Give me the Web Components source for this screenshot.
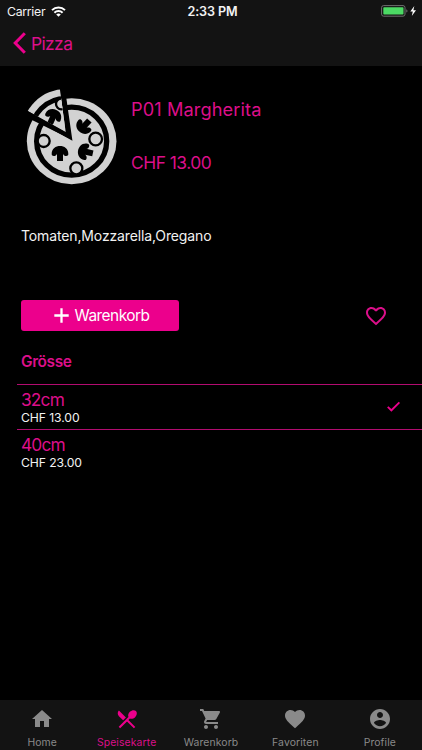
<!DOCTYPE html>
<html lang="de">
<head>
<meta charset="utf-8">
<meta name="viewport" content="width=device-width, initial-scale=1">
<title>P01 Margherita</title>
<style>
  :root {
    --accent: #ec008c;
    --accent-text: #dc0f8a;
    --bar-bg: #131313;
    --muted: #8a8a8a;
  }
  body {
    margin: 0;
    background: #000;
    color: #f2f2f2;
    font-family: Inter, "Liberation Sans", sans-serif;
  }
</style>
</head>
<body>
<pizza-app></pizza-app>

<script>
const define = (name, html) => {
  const tpl = document.createElement("template");
  tpl.innerHTML = html;
  customElements.define(name, class extends HTMLElement {
    constructor() {
      super();
      this.attachShadow({ mode: "open" }).appendChild(tpl.content.cloneNode(true));
    }
  });
};

/* ---- Icons ---- */
const ICONS = {
  home: "M10 20v-6h4v6h5v-8h3L12 3 2 12h3v8z",
  menu: "M8.1 13.34l2.83-2.83L3.91 3.5c-1.56 1.56-1.56 4.09 0 5.66l4.19 4.18zm6.78-1.81c1.53.71 3.68.21 5.27-1.38 1.91-1.91 2.28-4.65.81-6.12-1.46-1.46-4.2-1.1-6.12.81-1.59 1.59-2.09 3.74-1.38 5.27L3.7 19.87l1.41 1.41L12 14.41l6.88 6.88 1.41-1.41L13.41 13l1.47-1.47z",
  cart: "M7 18c-1.1 0-1.99.9-1.99 2S5.9 22 7 22s2-.9 2-2-.9-2-2-2zM1 2v2h2l3.6 7.59-1.35 2.45c-.16.28-.25.61-.25.96 0 1.1.9 2 2 2h12v-2H7.42c-.14 0-.25-.11-.25-.25l.03-.12.9-1.63h7.45c.75 0 1.41-.41 1.75-1.03l3.58-6.49c.08-.14.12-.31.12-.48 0-.55-.45-1-1-1H5.21l-.94-2H1zm16 16c-1.1 0-1.99.9-1.99 2s.89 2 1.99 2 2-.9 2-2-.9-2-2-2z",
  heart: "M12 21.35l-1.45-1.32C5.4 15.36 2 12.28 2 8.5 2 5.42 4.42 3 7.5 3c1.74 0 3.41.81 4.5 2.09C13.09 3.81 14.76 3 16.5 3 19.58 3 22 5.42 22 8.5c0 3.78-3.4 6.86-8.55 11.54L12 21.35z",
  "heart-outline": "M16.5 3c-1.74 0-3.41.81-4.5 2.09C10.91 3.81 9.24 3 7.5 3 4.42 3 2 5.42 2 8.5c0 3.78 3.4 6.86 8.55 11.54L12 21.35l1.45-1.32C18.6 15.36 22 12.28 22 8.5 22 5.42 19.58 3 16.5 3zm-4.4 15.55l-.1.1-.1-.1C7.14 14.24 4 11.39 4 8.5 4 6.5 5.5 5 7.5 5c1.54 0 3.04.99 3.57 2.36h1.87C13.46 5.99 14.96 5 16.5 5c2 0 3.5 1.5 3.5 3.5 0 2.89-3.14 5.74-7.9 10.05z",
  profile: "M12 2C6.48 2 2 6.48 2 12s4.48 10 10 10 10-4.48 10-10S17.52 2 12 2zm0 3c1.66 0 3 1.34 3 3s-1.34 3-3 3-3-1.34-3-3 1.34-3 3-3zm0 14.2c-2.5 0-4.71-1.28-6-3.22.03-1.99 4-3.08 6-3.08 1.99 0 5.97 1.09 6 3.08-1.29 1.94-3.5 3.22-6 3.22z",
  check: "M9 15.7 4.8 11.5 3 13.4 9 19.4 21.2 7.2 19.4 5.3z",
  plus: "M19.5 13.2h-6.3v6.3h-2.4v-6.3H4.5v-2.4h6.3V4.5h2.4v6.3h6.3z"
};

customElements.define("app-icon", class extends HTMLElement {
  constructor() {
    super();
    this.attachShadow({ mode: "open" });
  }
  connectedCallback() {
    const size = this.getAttribute("size") || 24;
    this.shadowRoot.innerHTML = `
      <style>
        :host { display: block; flex: none; width: ${size}px; height: ${size}px; }
        svg { display: block; width: 100%; height: 100%; fill: currentColor; }
      </style>
      <svg viewBox="0 0 24 24"><path d="${ICONS[this.getAttribute("name")]}"/></svg>
    `;
  }
});

/* ---- Status bar ---- */
define("status-bar", `
  <style>
    :host {
      display: grid;
      grid-template-columns: 1fr auto 1fr;
      align-items: center;
      height: 22px;
      padding: 0 5px 0 7px;
      font-size: 12.3px;
      color: #f4f4f4;
    }
    div { display: flex; align-items: center; }
    .carrier { letter-spacing: -0.3px; }
    .time { font-weight: 600; font-size: 12.6px; letter-spacing: -0.1px; padding-left: 1px; }
    .right { justify-content: flex-end; }
    .wifi { margin-left: 6px; }
    svg { display: block; }
  </style>
  <div>
    <span class="carrier">Carrier</span>
    <svg class="wifi" width="15" height="11" viewBox="0 0 15 11" fill="none" stroke="#fff" stroke-width="2">
      <path d="M1 4.1a9.3 9.3 0 0 1 13 0M3.4 6.7a5.9 5.9 0 0 1 8.2 0"/>
      <path d="M7.5 10.8 5.2 8.5a3.3 3.3 0 0 1 4.6 0z" fill="#fff" stroke="none"/>
    </svg>
  </div>
  <div class="time">2:33 PM</div>
  <div class="right">
    <svg width="36" height="12" viewBox="0 0 36 12">
      <rect x=".6" y=".6" width="23.4" height="10.6" rx="2" fill="none" stroke="#707070"/>
      <rect x="2.3" y="2.2" width="20.2" height="7.4" rx=".8" fill="#4cd964"/>
      <path d="M25.3 4.2c1.6.5 1.6 2.9 0 3.4z" fill="#707070"/>
      <path d="M33.3 1 29.3 6.5h2.5L30.8 11l4.2-5.8h-2.6z" fill="#fff"/>
    </svg>
  </div>
`);

/* ---- Navigation bar ---- */
define("nav-bar", `
  <style>
    :host {
      display: flex;
      align-items: center;
      height: 42px;
      padding: 0 0 2px 13px;
      gap: 5px;
      color: var(--accent-text);
      font-size: 17.4px;
      letter-spacing: -0.6px;
    }
    svg { display: block; }
  </style>
  <svg width="13" height="22" viewBox="0 0 13 22" fill="none" stroke="#ec008c" stroke-width="3">
    <path d="M11.8 1.2 2.2 11l9.6 9.8"/>
  </svg>
  <slot></slot>
`);

/* ---- Pizza picture ---- */
define("pizza-picture", `
  <style>
    :host { display: block; width: 110px; height: 110px; }
    svg { display: block; width: 100%; height: 100%; }
  </style>
  <svg viewBox="0 0 330 330">
    <defs>
      <g id="mushroom">
        <path d="M-25 3C-25-29 25-29 25 3 25 12 11 10 9 2V24H-9V2C-11 10-25 12-25 3Z"/>
      </g>
      <clipPath id="wedge"><path d="M152 157 20 83V0H131z"/></clipPath>
    </defs>
    <g fill="#d2d2d2">
      <ellipse cx="170" cy="183.5" rx="134.5" ry="129"/>
      <ellipse cx="170" cy="183.5" rx="105" ry="102" stroke="#000" stroke-width="16"/>
      <path d="M168 178 10 100V0H145z" fill="#000"/>
    </g>
    <use href="#mushroom" transform="translate(135 219)"/>
    <use href="#mushroom" transform="translate(207 139) rotate(222)"/>
    <use href="#mushroom" transform="translate(210 215) rotate(-78)"/>
    <g fill="#d2d2d2" stroke="#000" stroke-width="7">
      <circle cx="86" cy="183" r="18"/>
      <circle cx="242" cy="177" r="19"/>
      <circle cx="184" cy="265" r="18"/>
    </g>
    <g clip-path="url(#wedge)">
      <circle cx="153" cy="160" r="133" fill="#d2d2d2"/>
      <circle cx="153" cy="160" r="105" fill="#d2d2d2" stroke="#000" stroke-width="15"/>
      <circle cx="139" cy="72" r="16" fill="#d2d2d2" stroke="#000" stroke-width="7"/>
      <use href="#mushroom" transform="translate(115 109) rotate(24)"/>
    </g>
    <path d="M34 98 164 170 145 38" fill="none" stroke="#000" stroke-width="13"/>
  </svg>
`);

/* ---- Product ---- */
define("product-head", `
  <style>
    :host { display: flex; height: 146px; padding: 14px 0 0 15px; box-sizing: border-box; }
    .text { display: flex; flex-direction: column; gap: 30px; padding: 17px 0 0 6px; }
    .text { color: var(--accent-text); font-size: 18.2px; line-height: 24px; }
    .name { letter-spacing: 0.1px; }
    .price { font-size: 17.4px; letter-spacing: -0.5px; }
  </style>
  <pizza-picture></pizza-picture>
  <div class="text">
    <div class="name"><slot name="name"></slot></div>
    <div class="price"><slot name="price"></slot></div>
  </div>
`);

define("cart-button", `
  <style>
    :host { display: block; }
    button {
      display: flex;
      align-items: center;
      justify-content: center;
      gap: 2px;
      width: 158px;
      height: 31px;
      padding: 0 1px 0 0;
      border: none;
      border-radius: 3px;
      background: var(--accent);
      color: #fff;
      font: inherit;
      font-size: 15.4px;
      letter-spacing: -0.5px;
    }
  </style>
  <button><app-icon name="plus" size="23"></app-icon><span><slot></slot></span></button>
`);

/* ---- Sizes ---- */
define("size-row", `
  <style>
    :host {
      display: flex;
      align-items: center;
      justify-content: space-between;
      box-sizing: border-box;
      height: 45px;
      margin-left: 17px;
      padding: 0 20px 2px 4px;
      border-top: 1px solid #b20c70;
    }
    .info { padding-top: 2px; }
    .label { color: var(--accent-text); font-size: 17.3px; line-height: 20px; letter-spacing: -0.8px; }
    .price { font-size: 12.2px; line-height: 15px; letter-spacing: -0.1px; }
    app-icon { display: none; color: var(--accent); }
    :host([checked]) app-icon { display: block; }
  </style>
  <div class="info">
    <div class="label"><slot></slot></div>
    <div class="price"><slot name="price"></slot></div>
  </div>
  <app-icon name="check" size="17"></app-icon>
`);

/* ---- Tab bar ---- */
define("tab-item", `
  <style>
    :host {
      flex: 1;
      display: flex;
      flex-direction: column;
      align-items: center;
      padding-top: 7px;
      gap: 5px;
      color: var(--muted);
      font-size: 10.4px;
      line-height: 14px;
      letter-spacing: 0.12px;
    }
    :host([active]) { color: var(--accent-text); }
    :host([active]) ::slotted(app-icon) { color: var(--accent); }
  </style>
  <slot name="icon"></slot>
  <span><slot></slot></span>
`);

define("tab-bar", `
  <style>
    :host { display: flex; height: 50px; background: var(--bar-bg); }
  </style>
  <slot></slot>
`);

define("pizza-app", `
  <style>
    :host { display: flex; flex-direction: column; height: 750px; overflow: hidden; }
    header { background: var(--bar-bg); }
    main { flex: 1; }
    .desc { padding-left: 21px; height: 48px; line-height: 48px; font-size: 14px; letter-spacing: -0.13px; }
    .actions {
      display: flex;
      align-items: center;
      justify-content: space-between;
      padding: 40px 34px 0 21px;
      height: 31px;
    }
    .actions app-icon { color: var(--accent-text); }
    h2 {
      margin: 0;
      padding-left: 21px;
      height: 53px;
      line-height: 62px;
      font-size: 15.4px;
      font-weight: 600;
      letter-spacing: -0.35px;
      color: var(--accent-text);
    }
  </style>
  <header>
    <status-bar></status-bar>
    <nav-bar><span>Pizza</span></nav-bar>
  </header>
  <main>
    <product-head>
      <span slot="name">P01 Margherita</span>
      <span slot="price">CHF 13.00</span>
    </product-head>
    <div class="desc">Tomaten,Mozzarella,Oregano</div>
    <div class="actions">
      <cart-button>Warenkorb</cart-button>
      <app-icon name="heart-outline" size="24"></app-icon>
    </div>
    <h2>Grösse</h2>
    <size-row checked>32cm<span slot="price">CHF 13.00</span></size-row>
    <size-row>40cm<span slot="price">CHF 23.00</span></size-row>
  </main>
  <tab-bar>
    <tab-item><app-icon slot="icon" name="home"></app-icon>Home</tab-item>
    <tab-item active><app-icon slot="icon" name="menu"></app-icon>Speisekarte</tab-item>
    <tab-item><app-icon slot="icon" name="cart"></app-icon>Warenkorb</tab-item>
    <tab-item><app-icon slot="icon" name="heart"></app-icon>Favoriten</tab-item>
    <tab-item><app-icon slot="icon" name="profile"></app-icon>Profile</tab-item>
  </tab-bar>
`);
</script>
</body>
</html>
